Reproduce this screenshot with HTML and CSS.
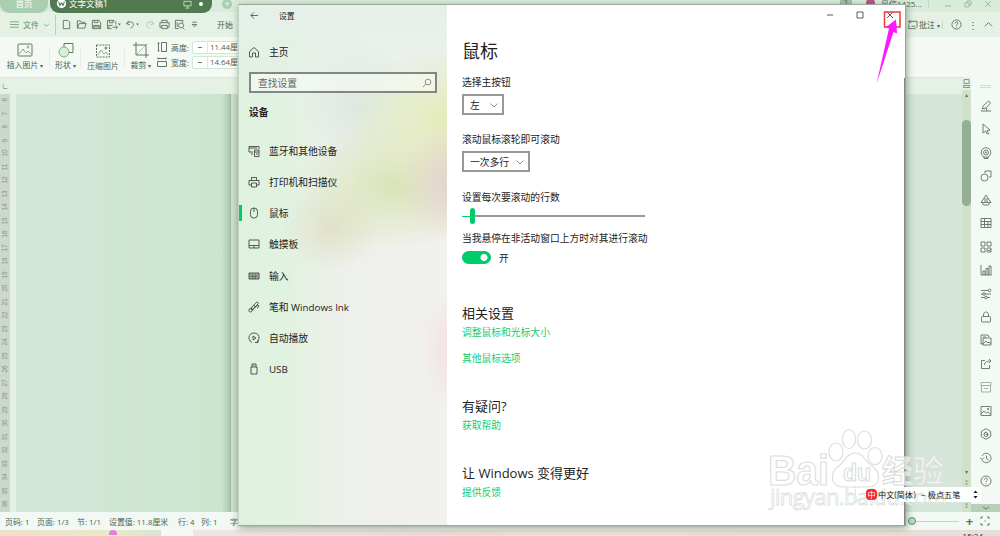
FILE: index.html
```html
<!DOCTYPE html>
<html lang="zh-CN">
<head>
  <meta charset="UTF-8" />
  <meta name="viewport" content="width=device-width, initial-scale=1.0"/>
  <title>设置</title>
  <link rel="stylesheet" href="styles.css">
</head>
<body>
  <div class="app">
    <!-- Tabs -->
    <div class="tabs">
      <div class="tab home-tab">首页</div>
      <div class="tab doc-tab">
        <svg class="logo" viewBox="0 0 12 12"><circle cx="6" cy="6" r="5.5" fill="#fff"/><path d="M2.8 4l1.5 4L6 5.5 7.700 8l1.500-4" fill="none" stroke="#4f784f" stroke-width="1.200"/></svg>
        <span>文字文稿1</span>
        <svg class="screen" viewBox="0 0 10 10"><path d="M1 1.500h8v5H1zM5 6.500v2M3 9h4"/></svg>
        <i class="dot"></i>
      </div>
      <div class="plus">+</div>
      <div class="tabs-right">
        <span class="badge">1</span>
        <span class="avatar"></span>
        <span class="user">风信1425...</span>
        <i class="bar"></i>
        <svg class="w-min" viewBox="0 0 8 8"><path d="M1 6h6"/></svg>
        <svg class="w-min" viewBox="0 0 8 8"><path d="M1 3h4v4H1zM3 3V1h4v4H5"/></svg>
        <svg class="w-min" viewBox="0 0 8 8"><path d="M1 1l6 6M7 1L1 7"/></svg>
      </div>
    </div>

    <!-- Menu -->
    <div class="menu">
      <svg class="burger" viewBox="0 0 10 10"><path d="M0 2h10M0 5h10M0 8h10"/></svg>
      <span class="file">文件</span>
      <svg class="chev" viewBox="0 0 8 8"><path d="M1 3l3 3 3-3"/></svg>
      <i class="sep"></i>
      <div class="quick">
        <svg viewBox="0 0 12 12"><path d="M2.500 1.500h5L9.500 3.500v7h-7z"/></svg>
        <svg viewBox="0 0 12 12"><path d="M1.500 10V2h3l1 1.500h4V5M1.500 10L3.500 5H11L9.500 10z"/></svg>
        <svg viewBox="0 0 12 12"><path d="M1.500 10.500v-9h7l2 2v7zM3.500 1.500v2.500h4V1.500M3 10.500V7h6v3.500M3 8.500h6"/></svg>
        <svg class="wide" viewBox="0 0 16 12"><path d="M6 10.500H1.500v-9h7l2 2V6M3.500 1.500v2.500h4V1.500M3 10V7h4M7 9h5M10.500 7l2 2-2 2"/><path class="fill" d="M13 5h3l-1.500 2z"/></svg>
        <svg class="wide" viewBox="0 0 16 12"><path d="M4 2L1.500 5 5 6.500M1.500 5C5 2 9 3 9 6c0 2-1 3-3 4"/><path class="fill" d="M12 5h3l-1.500 2z"/></svg>
        <svg class="faded" viewBox="0 0 12 12"><path d="M8 2l2.500 3L7 6.500M10.500 5C7 2 3 3 3 6c0 2 1 3 3 4"/></svg>
        <svg viewBox="0 0 12 12"><path d="M3 4V1.500h6V4M3 9H1V4h10v5H9M3 7h6v3.500H3z"/></svg>
        <svg viewBox="0 0 12 12"><path d="M5 10.500H1.500v-9h8V4M3.500 3.500v5M10 10l1.500 1.500"/><circle cx="7.800" cy="7" r="2.700"/></svg>
        <svg viewBox="0 0 12 12"><path d="M3.500 3.500h5M3.500 6L6 8.500 8.500 6z"/></svg>
      </div>
      <span class="start">开始</span>
      <div class="menu-right">
        <svg viewBox="0 0 12 12"><path d="M4 2.500h7v6L9 10.500H2V6M1 3h4M3 1v4M5 8h4"/></svg>
        <span>批注<small>▾</small></span>
        <i class="bar"></i>
        <svg viewBox="0 0 12 12"><circle cx="6" cy="6" r="5"/><path d="M4.500 4.800c0-2.300 3-2 3-.3C7.500 5.700 6 5.700 6 7M6 8.200v1"/></svg>
        <b>⋮</b>
        <svg viewBox="0 0 12 12"><path d="M2 8l4-4 4 4"/></svg>
      </div>
    </div>

    <!-- Ribbon -->
    <div class="ribbon">
      <div class="tool t1">
        <svg viewBox="0 0 16 16"><rect x="1" y="2" width="14" height="12" rx="1"/><path class="green" d="M2 12l4-5 3 4 2-2 3 3"/><circle class="green" cx="11" cy="5" r="1"/></svg>
        <span>插入图片<small>▾</small></span>
      </div>
      <div class="tool t2">
        <svg viewBox="0 0 16 16"><path d="M6 5V1.500h9v9h-4"/><circle class="green" cx="6" cy="10" r="5" fill="#d9eeda"/></svg>
        <span>形状<small>▾</small></span>
      </div>
      <div class="tool t3">
        <svg viewBox="0 0 16 16"><rect x="1.500" y="2" width="13" height="12" stroke-dasharray="2 1"/><path class="green" d="M3 12l3-5 3 4 2-2 2 3"/><circle cx="11" cy="5" r="1"/></svg>
        <span>压缩图片</span>
      </div>
      <div class="tool t4">
        <svg viewBox="0 0 16 16"><path d="M3 0v13h13M0 3h13v13"/><path class="green" d="M4 12L15 1" stroke-dasharray="2 1"/></svg>
        <span>裁剪<small>▾</small></span>
      </div>
      <div class="sizes">
        <div class="size">
          <svg viewBox="0 0 10 10"><path d="M4.500 .5h5v9h-5zM1.500 1v8M.5 1h2M.5 9h2"/></svg>
          <label>高度:</label><div class="num"><b>−</b><span>11.44厘米</span></div>
        </div>
        <div class="size">
          <svg viewBox="0 0 10 10"><path d="M.5 4.500h9v5h-9zM1 1.500h8M1 .5v2M9 .5v2"/></svg>
          <label>宽度:</label><div class="num"><b>−</b><span>14.64厘米</span></div>
        </div>
      </div>
    </div>

    <!-- Document -->
    <div class="work">
      <div class="editor">
        <div class="ruler-top">∟</div>
        <div class="canvas">
          <div class="ruler">
            <span>6</span><span>7</span><span>8</span><span>9</span><span>10</span><span>11</span><span>12</span><span>13</span><span>14</span><span>15</span><span>16</span><span>17</span><span>18</span><span>19</span><span>20</span><span>21</span><span>22</span><span>23</span><span>24</span><span>25</span><span>26</span><span>27</span><span>28</span><span>29</span><span>30</span><span>31</span><span>32</span><span>33</span><span>34</span><span>35</span><span>36</span>
          </div>
          <div class="page"></div>
          <div class="page-rest"></div>
        </div>
      </div>
      <div class="scroll">
        <svg viewBox="0 0 9 9"><path d="M2 .5h5v4H2zM1.500 6.500h6v2h-6z"/></svg>
        <i class="up">▴</i>
        <div class="thumb"></div>
        <i class="down">▾</i><i>⁑</i><i class="last">⁑</i>
      </div>
      <div class="side-tools">
        <i class="grip"></i>
        <svg viewBox="0 0 12 12"><path d="M1 11h10M2 9l1.500-3.500L8.500 1l2 2L6 8zM6 8l1 3"/></svg>
        <svg viewBox="0 0 12 12"><path d="M3 1l7 6-3 .5 1.500 3-1.500.5-1.500-3L3 10z"/></svg>
        <svg viewBox="0 0 12 12"><circle cx="6" cy="5.500" r="4.800"/><circle cx="6" cy="5.500" r="2.500"/><circle cx="6" cy="5.500" r=".7"/><path d="M4 10v1.500h4V10"/></svg>
        <svg viewBox="0 0 12 12"><path d="M5 3V1h6v6H9"/><circle cx="4.500" cy="7.500" r="3.500"/></svg>
        <svg viewBox="0 0 12 12"><path d="M6 1l2.500 4h-5zM3.500 5L1 8.500h10L8.500 5M2.500 9l1 2h5l1-2M4 7h4"/></svg>
        <svg viewBox="0 0 12 12"><path d="M1 1.500h10v9H1zM1 4.500h10M1 7.500h10M4.500 1.500v9M8 4.500v6"/></svg>
        <svg viewBox="0 0 12 12"><path d="M1 1h4v4H1zM7 1h4v4H7zM1 7h4v4H1zM7 7h4v4H7zM8 9l1 1 2-2"/></svg>
        <svg viewBox="0 0 12 12"><path d="M1 1v10h10.500M3 11V7h2v4M6 11V4.500h2V11M9 11V2h2v9"/></svg>
        <svg viewBox="0 0 12 12"><path d="M1 2.500h7M1 6h2M5 6h6M1 9.500h4M7 9.500h3"/><circle cx="9.500" cy="2.500" r="1.300"/><circle cx="4" cy="6" r="1.300"/><circle cx="6" cy="9.500" r="1.300"/></svg>
        <svg viewBox="0 0 12 12"><rect x="1.500" y="5.500" width="9" height="5.500" rx="1"/><path d="M3.500 5.500V4c0-4 5-4 5 0v1.500"/></svg>
        <svg viewBox="0 0 12 12"><path d="M3 10H1V1h7l1 2M3 11V4h8v7zM3 10l3-3 2 2 1-1 2 2M3 3h3"/></svg>
        <svg viewBox="0 0 12 12"><path d="M5 2.500H1.500v8h8V7M4.500 7C4.500 4 7 3 11 3M9 1l2 2-2 2"/></svg>
        <svg class="light" viewBox="0 0 12 12"><path d="M1 1.500h10v3H1zM1.500 4.500V11h9V4.500M4 7.500h4"/></svg>
        <svg viewBox="0 0 12 12"><path d="M1 1.500h10v9H1zM1 9l3-3 2.500 2L8 7l3 2.500"/><circle cx="8" cy="4" r=".8"/></svg>
        <svg viewBox="0 0 12 12"><path d="M6 .7l4.700 2.700v5.200L6 11.300 1.300 8.600V3.400z"/><circle cx="6" cy="6.500" r="2"/><path d="M6 3.500L4 6.500M6 6.500h2"/></svg>
        <svg viewBox="0 0 12 12"><path d="M2 4c2.500-5 9-2.500 9 2s-6 7-9 2M0 5.500l2 2 2-2M6.500 3.500V6.500L8.500 8"/></svg>
        <svg viewBox="0 0 12 12"><circle cx="6" cy="6" r="5"/><path d="M4.500 4.800c0-2.300 3-2 3-.3C7.500 5.700 6 5.700 6 7M6 8.200v1"/></svg>
        <div class="more"><svg viewBox="0 0 8 8"><path d="M1 3l3 2 3-2"/></svg></div>
      </div>
    </div>

    <!-- Status bar -->
    <div class="status">
      <span class="s1">页码: 1</span><span class="s2">页面: 1/3</span><span class="s3">节: 1/1</span><span class="s4">设置值: 11.8厘米</span><span class="s5">行: 4</span><span class="s6">列: 1</span><span>字数</span>
      <div class="zoom">
        <i class="knob"></i><i class="line"></i><b>+</b>
        <svg viewBox="0 0 10 10"><path d="M1 3V1h2M7 1h2v2M9 7v2H7M3 9H1V7M4.500 5h1"/></svg>
      </div>
    </div>
    <div class="taskbar"><i></i><span>15:24</span></div>
  </div>

  <!-- Settings window -->
  <div class="window">
    <div class="sidebar">
      <div class="title">
        <svg viewBox="0 0 10 10"><path d="M9 5H1M4.500 1.500L1 5l3.500 3.500"/></svg>
        <span>设置</span>
      </div>
      <div class="nav home">
        <svg viewBox="0 0 12 12"><path d="M1.500 5.500L6 1.500l4.500 4V11H7.500V7h-3v4H1.500z"/></svg>
        <span>主页</span>
      </div>
      <div class="search">
        <span>查找设置</span>
        <svg viewBox="0 0 10 10"><circle cx="6" cy="4" r="2.800"/><path d="M4 6L1 9"/></svg>
      </div>
      <h3>设备</h3>
      <div class="nav">
        <svg viewBox="0 0 12 12"><path d="M5 7H1V1.500h10V4M1 3h8M3 9h2M6.500 5H11v6.500H6.500zM6.500 7H11M8 9h2"/></svg>
        <span>蓝牙和其他设备</span>
      </div>
      <div class="nav">
        <svg viewBox="0 0 12 12"><path d="M3.500 4.500v-3h5v3M3.500 9H1V4.500h10V9H8.500M3.500 7h5v4h-5z"/></svg>
        <span>打印机和扫描仪</span>
      </div>
      <div class="nav active">
        <svg viewBox="0 0 12 12"><rect x="2.500" y="1" width="7" height="10" rx="3.300"/><path d="M6 1v4"/></svg>
        <span>鼠标</span>
      </div>
      <div class="nav">
        <svg viewBox="0 0 12 12"><path d="M1 2h10v8H1zM1 7.500h10M6 7.500V10"/></svg>
        <span>触摸板</span>
      </div>
      <div class="nav">
        <svg viewBox="0 0 12 12"><path d="M1 3h10v6H1z" fill="#aab8aa"/><path d="M2.500 5h7M2.500 6.500h7M4 8h4" stroke-dasharray="1 .5"/></svg>
        <span>输入</span>
      </div>
      <div class="nav">
        <svg viewBox="0 0 12 12"><path d="M3 9l1-3L9 .8l1.500 1.500L5.500 8zM4 7C0 7 0 11 2.500 11 5 11 4 8 7 6l3-2 1 1.500L9 7M5 4l3 2"/></svg>
        <span>笔和 Windows Ink</span>
      </div>
      <div class="nav">
        <svg viewBox="0 0 12 12"><path d="M4 10.500C-1 8 .5 1 6 1s6.500 6 3 9M7 10.500h3V8M5 4v4l3-2z"/></svg>
        <span>自动播放</span>
      </div>
      <div class="nav">
        <svg viewBox="0 0 12 12"><path d="M3 4h6v7H3zM4 4V1h4v3M5 2.500h.5M6.500 2.500H7"/></svg>
        <span>USB</span>
      </div>
    </div>

    <div class="main">
      <div class="controls">
        <svg viewBox="0 0 8 8"><path d="M1 4h6"/></svg>
        <svg viewBox="0 0 8 8"><path d="M1 1h6v6H1z"/></svg>
        <svg viewBox="0 0 8 8"><path d="M1 1l6 6M7 1L1 7"/></svg>
      </div>
      <h1>鼠标</h1>
      <p>选择主按钮</p>
      <div class="select short"><span>左</span><svg viewBox="0 0 8 8"><path d="M.5 2.500L4 6l3.500-3.500"/></svg></div>
      <p>滚动鼠标滚轮即可滚动</p>
      <div class="select"><span>一次多行</span><svg viewBox="0 0 8 8"><path d="M.5 2.500L4 6l3.500-3.500"/></svg></div>
      <p>设置每次要滚动的行数</p>
      <div class="slider"><i class="done"></i><i class="handle"></i><i class="rest"></i></div>
      <p class="hover-label">当我悬停在非活动窗口上方时对其进行滚动</p>
      <div class="switch"><i></i><span>开</span></div>
      <h2>相关设置</h2>
      <a>调整鼠标和光标大小</a>
      <a class="second">其他鼠标选项</a>
      <h2 class="ask">有疑问?</h2>
      <a>获取帮助</a>
      <h2 class="better">让 Windows 变得更好</h2>
      <a>提供反馈</a>
    </div>
  </div>

  <!-- Input method bar -->
  <div class="ime">
    <i class="ime-icon">中</i><span>中文(简体）− 极点五笔</span>
    <svg viewBox="0 0 5 9"><path d="M.5 3L2.500 .5 4.500 3zM.5 6L2.500 8.500 4.500 6z"/></svg>
  </div>

  <!-- Watermark -->
  <div class="watermark">
    <svg viewBox="0 0 182 95">
      <ellipse cx="68" cy="31" rx="7" ry="9"/><ellipse cx="81" cy="18" rx="6.500" ry="9.500"/><ellipse cx="96.500" cy="19" rx="7" ry="9"/><ellipse cx="107" cy="35" rx="7" ry="8.500"/>
      <path d="M87 32c-8 0-9 7-15 12-11 7-10 22 3 22h25c13 0 14-15 3-22-7-5-8-12-16-12z"/>
      <text x="0" y="64" font-size="42" textLength="61" lengthAdjust="spacingAndGlyphs">Bai</text>
      <text x="75" y="60" font-size="24" textLength="28" lengthAdjust="spacingAndGlyphs">du</text>
      <text class="cjk" x="114" y="61" font-size="31">经验</text>
      <text class="url" x="2" y="84" font-size="22" textLength="177">jingyan.baidu.com</text>
    </svg>
  </div>

  <!-- Pointer to the close button -->
  <svg class="arrow" viewBox="0 0 30 76">
    <rect x="8.500" y="3" width="15.500" height="15" stroke="#f8353a" stroke-width="1.500"/>
    <path d="M.5 75L13 19.500l-3.500-1L20 10.500l1 14-3.500-1.500z" fill="#ff18ff" stroke="none"/>
  </svg>
</body>
</html>
```

FILE: styles.css
```css
* {
  box-sizing: border-box;
}
body {
  margin: 0;
  width: 1000px;
  height: 536px;
  overflow: hidden;
  position: relative;
  font-family: 'Open Sans', 'Noto Sans CJK SC', sans-serif;
  font-size: 9px;
  color: #4e644e;
}
i {
  font-style: normal;
}
svg {
  display: block;
  flex: none;
  fill: none;
  stroke: #536853;
  stroke-width: 0.9;
}
small {
  font-size: 6px;
  margin-left: 2px;
}
.app {
  height: 536px;
  display: flex;
  flex-direction: column;
  background: #e4f1e4;
}

/* tabs */
.tabs {
  height: 12px;
  display: flex;
  background: #d9ebda;
  line-height: 8px;
}
.tab {
  height: 13px;
  border-radius: 0 0 9px 9px;
  color: #fff;
  font-size: 8.500px;
}
.home-tab {
  width: 48px;
  background: #a9ceb0;
  text-align: center;
}
.doc-tab {
  width: 162px;
  margin-left: 2px;
  padding-left: 6px;
  background: #517a51;
  display: flex;
}
.logo {
  width: 11px;
  height: 11px;
  margin: -2px 2px 0 0;
}
.screen {
  width: 9px;
  height: 9px;
  margin-left: auto;
  stroke: #d5e5d5;
}
.dot {
  width: 4px;
  height: 4px;
  border-radius: 2px;
  margin: 2px 9px 0 7px;
  background: #fff;
}
.plus {
  width: 10px;
  height: 10px;
  margin: -1px 0 0 10px;
  border-radius: 5px;
  background: #a9ceb0;
  color: #fff;
  text-align: center;
  line-height: 9px;
}
.tabs-right {
  margin-left: auto;
  display: flex;
  width: 160px;
}
.badge {
  width: 12px;
  height: 5px;
  line-height: 5px;
  text-align: center;
  background: #9bc6a3;
}
.avatar {
  width: 9px;
  height: 8px;
  margin: -1px 0 0 14px;
  border-radius: 4px;
  background: #b8528c;
}
.user {
  margin-left: 6px;
  width: 47px;
  font-size: 8px;
  line-height: 8px;
  white-space: nowrap;
}
.bar {
  width: 1px;
  height: 8px;
  background: #c4d8c4;
}
.w-min {
  width: 8px;
  height: 8px;
  margin-left: 12px;
  stroke: #9eb29e;
}
.w-min:first-of-type {
  margin-left: 15px;
}

/* menu */
.menu {
  height: 25px;
  display: flex;
  align-items: center;
  padding-left: 10px;
}
.burger {
  width: 9px;
  height: 9px;
  stroke: #689c6b;
}
.file {
  margin-left: 4px;
  width: 17px;
  font-size: 8px;
  color: #5d8d5f;
}
.chev {
  width: 7px;
  height: 7px;
  margin-left: 3px;
  stroke: #7da67f;
}
.sep {
  width: 1px;
  height: 20px;
  margin: 0 5px;
  background: #bdcebd;
}
.quick {
  display: flex;
  gap: 4px;
}
.quick svg {
  width: 11px;
  height: 11px;
}
.quick .wide {
  width: 15px;
}
.quick .faded {
  opacity: 0.35;
}
.fill {
  fill: #536853;
  stroke: none;
}
.start {
  margin-left: 17px;
  font-size: 8px;
}
.menu-right {
  margin-left: auto;
  width: 93px;
  display: flex;
  align-items: center;
  font-size: 8px;
}
.menu-right svg {
  width: 11px;
  height: 11px;
}
.menu-right span {
  margin: 0 2px 0 1px;
  white-space: nowrap;
}
.menu-right .bar {
  margin-right: 8px;
}
.menu-right b {
  width: 21px;
  text-align: center;
  font-size: 10px;
  font-weight: normal;
}

/* ribbon */
.ribbon {
  height: 40px;
  display: flex;
  background: #f4f9f4;
  font-size: 7.900px;
}
.tool {
  display: flex;
  flex-direction: column;
  align-items: center;
  justify-content: flex-end;
  padding-bottom: 5px;
  line-height: 11px;
  gap: 2px;
  white-space: nowrap;
}
.tool svg {
  width: 16px;
  height: 16px;
}
.green {
  stroke: #74a778;
}
.t1 {
  width: 50px;
}
.t2 {
  width: 31px;
}
.t3 {
  width: 44px;
}
.t4 {
  width: 32px;
}
.t1, .t2, .t3 {
  background: linear-gradient(#e1efe3, #e1efe3) 100% 50% / 1px 20px no-repeat;
}
.sizes {
  padding-top: 3px;
  display: flex;
  flex-direction: column;
  gap: 1px;
}
.size {
  height: 14px;
  display: flex;
  align-items: center;
}
.size svg {
  width: 10px;
  height: 10px;
}
.size label {
  margin-left: 4px;
  width: 21px;
  white-space: nowrap;
}
.num {
  display: flex;
  width: 60px;
  height: 13px;
  line-height: 11px;
  border: 1px solid #cce9d1;
  border-radius: 2px;
  background: #fff;
  white-space: nowrap;
}
.num b {
  width: 15px;
  text-align: center;
  border-right: 1px solid #dceadd;
}
.num span {
  padding-left: 2px;
}

/* document */
.work {
  height: 435px;
  display: flex;
}
.editor {
  width: 962px;
  border-top: 1px solid #d4e9d7;
}
.ruler-top {
  height: 16px;
  padding-left: 2px;
  font-size: 6px;
  line-height: 16px;
}
.canvas {
  height: 418px;
  display: flex;
}
.ruler {
  width: 10px;
  display: flex;
  flex-direction: column;
  background: #ccd8cc;
  font-family: 'Liberation Sans', sans-serif;
  font-size: 6.500px;
  color: #819481;
}
.ruler span {
  height: 13.530px;
  flex: none;
  writing-mode: vertical-rl;
  transform: rotate(180deg);
  text-align: center;
  line-height: 10px;
  padding-top: 3px;
}
.page {
  width: 214px;
  margin-left: 6px;
  background: linear-gradient(90deg, #d3e6da, #cbe6cf 96%, #adc8b2);
}
.page-rest {
  flex: 1;
  border-left: 1px solid #9db69e;
  background: linear-gradient(90deg, #cfe2c9 0, #bfd8c2 8px, #d4e6da 9px);
}
.scroll {
  width: 9px;
  display: flex;
  flex-direction: column;
  align-items: center;
  background: #d0e1c9;
  font-size: 6px;
  color: #4a8050;
}
.scroll svg {
  width: 9px;
  height: 13px;
  padding: 2px 0;
  background: #e4f1e4;
  stroke: #6b966e;
}
.scroll i {
  line-height: 11px;
}
.up {
  height: 30px;
}
.thumb {
  width: 9px;
  height: 86px;
  border-radius: 5px;
  background: #93ae92;
}
.scroll .down {
  margin-top: auto;
}
.scroll .last {
  margin-top: 12px;
}
.side-tools {
  width: 29px;
  display: flex;
  flex-direction: column;
  align-items: center;
  background: #f3f9f4;
}
.side-tools svg {
  width: 12px;
  height: 12px;
  margin-bottom: 11.450px;
  stroke: #647064;
}
.side-tools .light {
  stroke: #9ba89b;
}
.grip {
  width: 11px;
  height: 3px;
  margin: 8px 0 12px;
  border: solid #cfdbcf;
  border-width: 1px 0;
}
.more {
  margin-top: auto;
  width: 29px;
  height: 8px;
  background: #b9cfb9;
}
.side-tools .more svg {
  width: 8px;
  height: 8px;
  margin: 0 auto;
}

/* status bar */
.status {
  height: 18px;
  display: flex;
  align-items: center;
  padding-left: 5px;
  background: #f2f8f3;
  font-size: 7.900px;
  white-space: nowrap;
}
.s1 {
  width: 32px;
}
.s2 {
  width: 40px;
}
.s3 {
  width: 32px;
}
.s4 {
  width: 69px;
}
.s5 {
  width: 23px;
}
.s6 {
  width: 29px;
}
.zoom {
  margin-left: auto;
  display: flex;
  align-items: center;
  width: 92px;
}
.knob {
  width: 8px;
  height: 8px;
  border: 1px solid #5e9364;
  border-radius: 4px;
  background: #b9deba;
}
.line {
  width: 43px;
  height: 1px;
  background: #bed6bf;
}
.zoom b {
  width: 21px;
  text-align: center;
  font-size: 13px;
  color: #4a8050;
}
.zoom svg {
  width: 10px;
  height: 10px;
}
.taskbar {
  height: 6px;
  display: flex;
  overflow: hidden;
  background: linear-gradient(90deg, #eee0cc, #e8eac9 110px, #d9e4d5 161px, #f5f8f3 161px, #f5f8f3 193px, #ece6e2 193px, #eddfdc 450px, #eee4d8 560px, #e5dfda);
  color: #333;
  font-size: 8px;
  line-height: 10px;
}
.taskbar i {
  width: 8px;
  height: 5px;
  margin-left: 109px;
  border-radius: 4px 4px 0 0;
  background: #df83d8;
}
.taskbar span {
  margin: 1px 17px 0 auto;
}

/* settings window */
.window {
  position: absolute;
  left: 238px;
  top: 4px;
  width: 668px;
  height: 522px;
  display: flex;
  border: 1px solid #9da79d;
  border-left-color: #c5d5c5;
  background: #fff;
  box-shadow: 1px 2px 7px rgba(50, 75, 50, 0.5);
  font-size: 9.770px;
  color: #222;
}
.window svg {
  stroke: #333;
  stroke-width: 0.8;
}
.sidebar {
  width: 208px;
  background:
    radial-gradient(ellipse 55px 60px at 215px 178px, #e2d2cc, rgba(226, 210, 204, 0)),
    radial-gradient(ellipse 35px 60px at 215px 345px, #f5dfe0, rgba(245, 223, 224, 0)),
    radial-gradient(ellipse 100px 70px at 205px 115px, #e2ebb8, rgba(226, 235, 184, 0)),
    radial-gradient(ellipse 100px 65px at 155px 180px, #d9e4b6, rgba(217, 228, 182, 0)),
    radial-gradient(ellipse 50px 45px at 92px 222px, #e1e1c9, rgba(225, 225, 201, 0)),
    radial-gradient(ellipse 60px 60px at 120px 100px, #dce8e2, rgba(220, 232, 226, 0)),
    linear-gradient(180deg, #e6f0e9 0, rgba(230, 240, 233, 0) 120px),
    linear-gradient(90deg, #dff2df 0, #e0f2e0 45px, #eef0eb 100px, #f1f1ee);
}
.title {
  height: 20px;
  display: flex;
  align-items: center;
  font-size: 7.800px;
  padding-left: 11px;
}
.title svg {
  width: 9px;
  height: 9px;
  margin-right: 20px;
}
.nav {
  height: 31.250px;
  display: flex;
  align-items: center;
  padding-left: 9px;
  white-space: nowrap;
}
.nav svg {
  width: 12px;
  height: 12px;
  margin-right: 9px;
}
.nav.home {
  height: 24px;
  margin-top: 15px;
}
.nav.active {
  background: linear-gradient(#00cc6a, #00cc6a) 0 50% / 3px 16px no-repeat;
}
.search {
  width: 188px;
  height: 21px;
  margin: 8px 0 0 10px;
  padding: 0 3px 0 7px;
  border: 2px solid #828782;
  background: rgba(255, 255, 255, 0.45);
  display: flex;
  align-items: center;
  justify-content: space-between;
  color: #626862;
}
.search svg {
  width: 10px;
  height: 10px;
  stroke: #727872;
}
.sidebar h3 {
  margin: 12px 0 15px 10px;
  font-size: 9.770px;
  line-height: 15px;
}
.main {
  flex: 1;
  padding-left: 15px;
  background: linear-gradient(#858585, #858585) 457px 73px / 1.5px 460px no-repeat;
}
.controls {
  height: 20px;
  display: flex;
  align-items: center;
  justify-content: flex-end;
  gap: 22px;
  padding-right: 11px;
}
.controls svg {
  width: 8px;
  height: 8px;
}
.main h1 {
  margin: 14px 0 13px;
  font-size: 18px;
  font-weight: normal;
  line-height: 24px;
}
.main p {
  margin: 0 0 4px;
  line-height: 14px;
}
.select {
  width: 68px;
  height: 21px;
  margin-bottom: 19px;
  padding: 0 4px 0 6px;
  border: 2px solid #999;
  display: flex;
  align-items: center;
  justify-content: space-between;
}
.select.short {
  width: 42px;
  margin-bottom: 18px;
}
.select svg {
  width: 8px;
  height: 8px;
  stroke: #777;
}
.slider {
  width: 183px;
  height: 16px;
  margin-top: -1px;
  display: flex;
  align-items: center;
}
.done {
  width: 8px;
  height: 1px;
  background: #00cc6a;
}
.handle {
  width: 5px;
  height: 16px;
  border-radius: 3px;
  background: #00cc6a;
}
.rest {
  flex: 1;
  height: 1.500px;
  background: #999;
}
.main .hover-label {
  margin: 8px 0 5px;
}
.switch {
  height: 13px;
  display: flex;
  align-items: center;
}
.switch i {
  width: 29px;
  height: 13px;
  margin-right: 8px;
  border-radius: 7px;
  background: radial-gradient(circle at 22px 50%, #fff 3px, #00cc6a 4px);
}
.main h2 {
  margin: 40px 0 4px;
  font-size: 13px;
  font-weight: normal;
  line-height: 18px;
}
.main a {
  display: block;
  line-height: 14px;
  color: #13cd72;
}
.main .second {
  margin-top: 12px;
}
.main .ask {
  margin-top: 31px;
}
.main .better {
  margin-top: 31px;
}

/* watermark sits between the input bar's white back and its text */
.watermark {
  position: absolute;
  z-index: 2;
  left: 768px;
  top: 421px;
  width: 182px;
  height: 95px;
}
.watermark svg {
  width: 182px;
  height: 95px;
  fill: rgba(255, 255, 255, 0.65);
  stroke: #dcdfdc;
  stroke-width: 1.2;
  font-family: 'Liberation Sans', sans-serif;
  font-weight: bold;
}
.watermark .cjk {
  font-family: 'Noto Sans CJK SC', sans-serif;
}
.watermark .url {
  font-family: 'Open Sans', sans-serif;
  font-weight: normal;
  stroke-width: 0.8;
}
.ime {
  position: absolute;
  left: 855px;
  top: 487px;
  width: 126px;
  height: 15px;
  display: flex;
  align-items: center;
  padding: 0 3px 0 10px;
  border-left: 1px dotted #ccc;
  color: #111;
  font-size: 8.150px;
  white-space: nowrap;
}
.ime::before {
  content: '';
  position: absolute;
  z-index: 1;
  inset: 0;
  background: #fff;
}
.ime > * {
  position: relative;
  z-index: 3;
}
.ime-icon {
  width: 11px;
  height: 11px;
  border-radius: 4px;
  margin-right: 1px;
  background: #f12a2e;
  color: #fff;
  line-height: 11px;
  text-align: center;
}
.ime svg {
  width: 5px;
  height: 9px;
  margin-left: auto;
  fill: #111;
  stroke: none;
}
.arrow {
  position: absolute;
  left: 876px;
  top: 9px;
  width: 30px;
  height: 76px;
}
```
